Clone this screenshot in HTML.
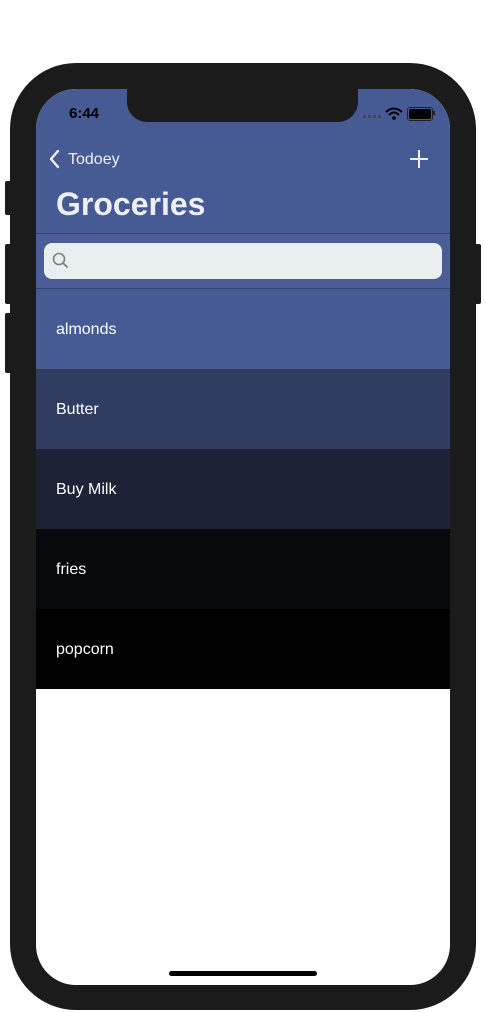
<!DOCTYPE html><html><head><style>
body{margin:0;width:486px;height:1012px;background:#fff;position:relative;overflow:hidden;font-family:"Liberation Sans",sans-serif}
.a{position:absolute}
</style></head><body>
<div class="a" style="left:5px;top:181px;width:8px;height:34px;background:#1b1b1b;border-radius:2px"></div>
<div class="a" style="left:5px;top:244px;width:8px;height:60px;background:#1b1b1b;border-radius:2px"></div>
<div class="a" style="left:5px;top:313px;width:8px;height:60px;background:#1b1b1b;border-radius:2px"></div>
<div class="a" style="left:473px;top:244px;width:8px;height:60px;background:#1b1b1b;border-radius:2px"></div>
<div class="a" style="left:10px;top:63px;width:466px;height:947px;background:#1b1b1b;border-radius:66px"></div>
<div class="a" style="left:36px;top:89px;width:414px;height:896px;background:#fff;border-radius:40px;overflow:hidden">
 <div class="a" style="left:0;top:0;width:414px;height:200px;background:#465a93"></div>
 <div class="a" style="left:0;top:144px;width:414px;height:1px;background:#34446f"></div>
 <div class="a" style="left:0;top:145px;width:414px;height:54px;background:#4a5d96"></div>
 <div class="a" style="left:0;top:199px;width:414px;height:1px;background:#34446f"></div>
 <div class="a" style="left:8px;top:154px;width:398px;height:36px;background:#e9eeee;border-radius:8px"></div>
 <svg class="a" style="left:15px;top:162px" width="20" height="20"><circle cx="8" cy="8" r="5.5" fill="none" stroke="#7b7f84" stroke-width="1.6"/><line x1="12" y1="12" x2="16" y2="16" stroke="#7b7f84" stroke-width="1.8" stroke-linecap="round"/></svg>
 <div class="a" style="left:0;top:200px;width:414px;height:80px;background:#465a93"></div>
 <div class="a" style="left:0;top:280px;width:414px;height:80px;background:#313d60"></div>
 <div class="a" style="left:0;top:360px;width:414px;height:80px;background:#1d2236"></div>
 <div class="a" style="left:0;top:440px;width:414px;height:80px;background:#07090d"></div>
 <div class="a" style="left:0;top:520px;width:414px;height:80px;background:#000"></div>
 <div class="a" style="left:20px;top:232px;color:#fff;font-size:16px">almonds</div>
 <div class="a" style="left:20px;top:312px;color:#fff;font-size:16px">Butter</div>
 <div class="a" style="left:20px;top:392px;color:#fff;font-size:16px">Buy Milk</div>
 <div class="a" style="left:20px;top:472px;color:#fff;font-size:16px">fries</div>
 <div class="a" style="left:20px;top:552px;color:#fff;font-size:16px">popcorn</div>
 <div class="a" style="left:91px;top:0;width:231px;height:33px;background:#1b1b1b;border-radius:0 0 20px 20px"></div>
 <div class="a" style="left:33px;top:16px;font-size:15px;font-weight:bold;color:#000">6:44</div>
 <svg class="a" style="left:327px;top:26px" width="20" height="4"><g fill="#3a4560"><rect x="0" y="0" width="3" height="3"/><rect x="5" y="0" width="3" height="3"/><rect x="10" y="0" width="3" height="3"/><rect x="15" y="0" width="3" height="3"/></g></svg>
 <svg class="a" style="left:349px;top:18px" width="18" height="14"><path d="M1 5 Q9 -2 17 5" fill="none" stroke="#000" stroke-width="2"/><path d="M4 8 Q9 3 14 8" fill="none" stroke="#000" stroke-width="2"/><circle cx="9" cy="11" r="1.8"/></svg>
 <div class="a" style="left:371px;top:18px;width:22px;height:10px;border:1px solid #222;border-radius:3px;padding:1px;box-sizing:content-box"><div style="width:100%;height:100%;background:#000;border-radius:2px"></div></div>
 <div class="a" style="left:397px;top:22px;width:2px;height:4px;background:#222"></div>
 <svg class="a" style="left:12px;top:60px" width="14" height="20"><path d="M10 2 L3 10 L10 18" fill="none" stroke="#eef0f5" stroke-width="2.4" stroke-linecap="round" stroke-linejoin="round"/></svg>
 <div class="a" style="left:32px;top:62px;font-size:16px;color:#eef0f5">Todoey</div>
 <svg class="a" style="left:373px;top:60px" width="20" height="20"><path d="M10 1V19M1 10H19" stroke="#eef0f5" stroke-width="2"/></svg>
 <div class="a" style="left:20px;top:97px;font-size:32px;font-weight:bold;color:#eef0f5">Groceries</div>
 <div class="a" style="left:133px;top:882px;width:148px;height:5px;background:#000;border-radius:3px"></div>
</div>
</body></html>
